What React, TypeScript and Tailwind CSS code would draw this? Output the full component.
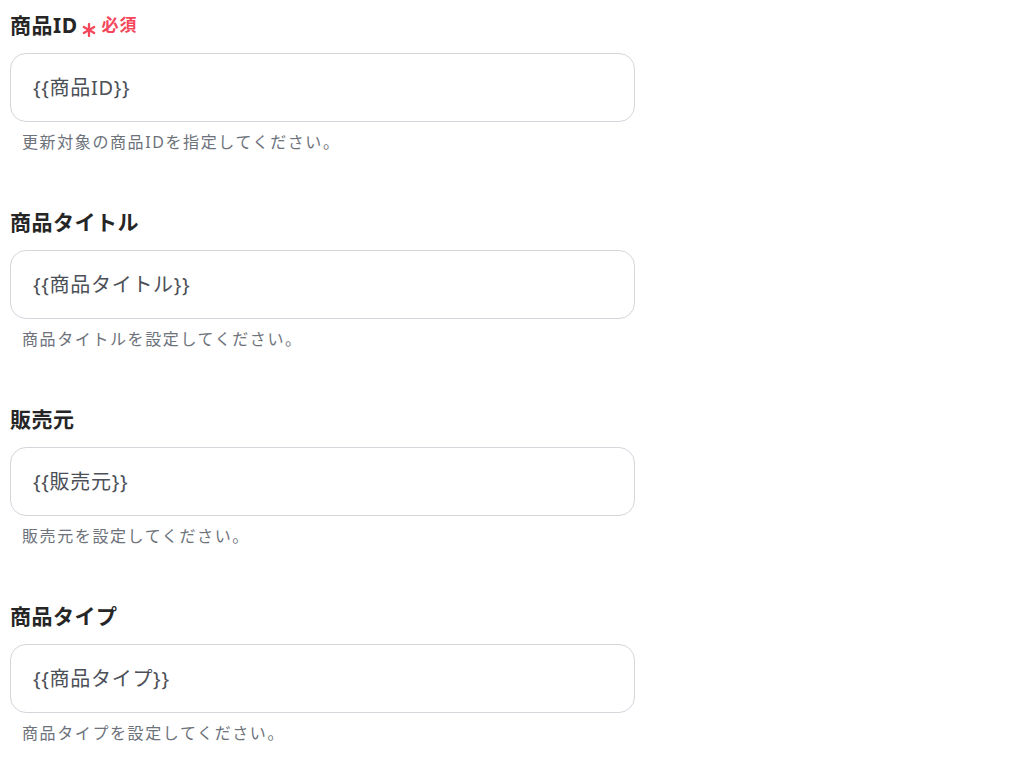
import React from "react";

const font = { fontFamily: '"Noto Sans", "Noto Sans CJK JP", sans-serif' };

function Asterisk() {
  return (
    <svg width="14" height="14" viewBox="0 0 14 14" className="ml-[4px] mt-[9px]" aria-hidden>
      <g stroke="#f5475b" strokeWidth="2.3" strokeLinecap="round">
        <line x1="7" y1="1" x2="7" y2="13" />
        <line x1="1.8" y1="4" x2="12.2" y2="10" />
        <line x1="1.8" y1="10" x2="12.2" y2="4" />
      </g>
    </svg>
  );
}

function Field({ label, value, help, required }: { label: string; value: string; help: string; required?: boolean }) {
  return (
    <div className="flex flex-col">
      <div className="flex items-center h-[26px]">
        <span className="text-[21px] leading-[26px] font-bold tracking-[0.5px] text-[#262626]">{label}</span>
        {required && (
          <>
            <Asterisk />
            <span className="ml-[6px] text-[17px] leading-[26px] font-bold tracking-[1px] text-[#f5475b]">必須</span>
          </>
        )}
      </div>
      <div className="mt-[15px] w-[625px] h-[69px] rounded-[16px] border border-[#d4d6dc] bg-white flex items-center pl-[22px]">
        <span className="text-[20px] tracking-[0.7px] text-[#4b4f57]">{value}</span>
      </div>
      <div className="mt-[10px] pl-[12px] text-[16px] leading-[20px] tracking-[1.6px] text-[#6d727b]">{help}</div>
    </div>
  );
}

export default function App() {
  return (
    <div className="min-h-[763px] bg-white pl-[10px] pt-[12px] flex flex-col gap-[57px]" style={font}>
      <Field label="商品ID" value="{{商品ID}}" help="更新対象の商品IDを指定してください。" required />
      <Field label="商品タイトル" value="{{商品タイトル}}" help="商品タイトルを設定してください。" />
      <Field label="販売元" value="{{販売元}}" help="販売元を設定してください。" />
      <Field label="商品タイプ" value="{{商品タイプ}}" help="商品タイプを設定してください。" />
    </div>
  );
}
